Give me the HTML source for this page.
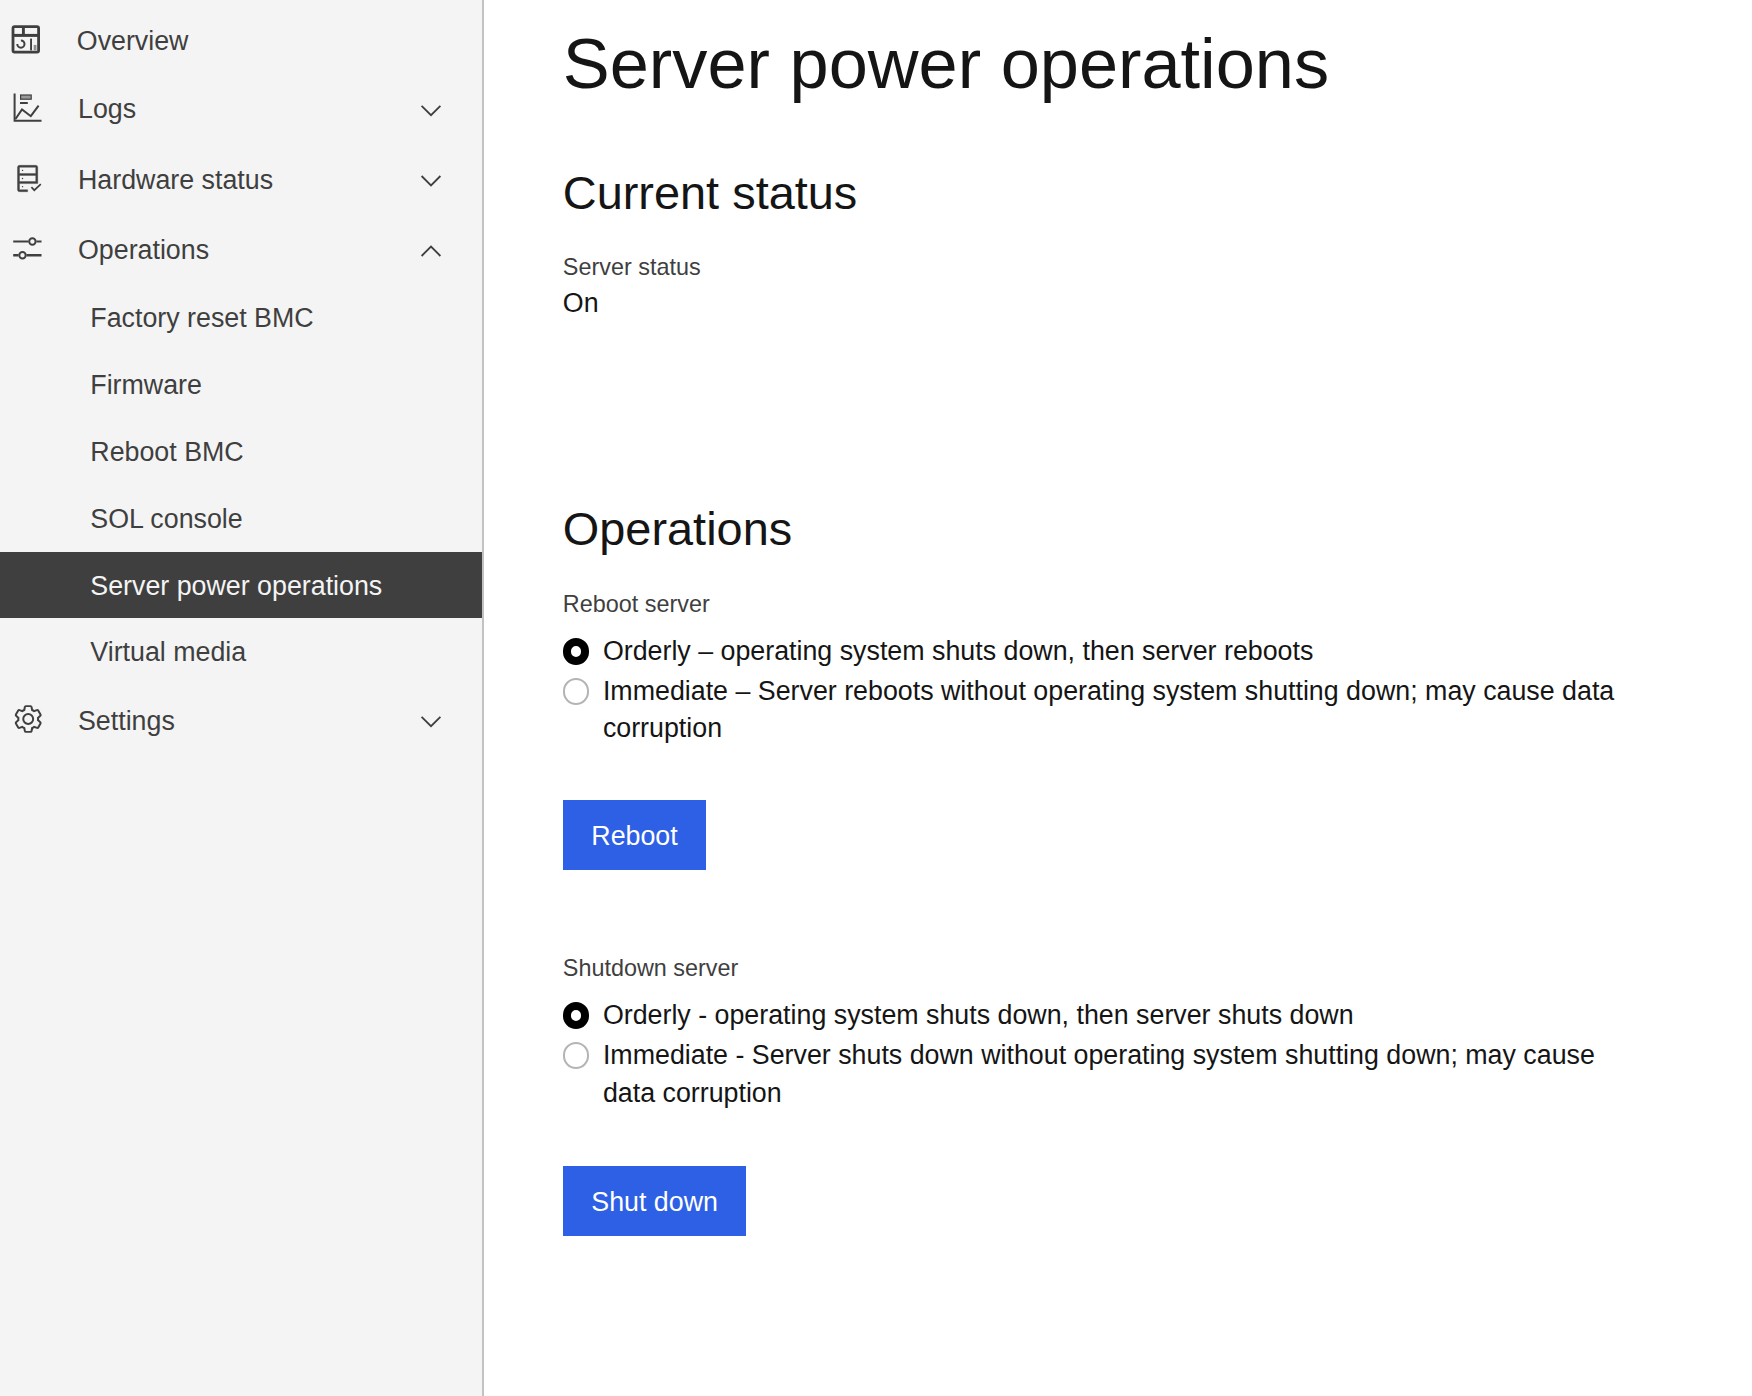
<!DOCTYPE html>
<html>
<head>
<meta charset="utf-8">
<style>
html,body{margin:0;padding:0;width:1752px;height:1396px;overflow:hidden;background:#fff;}
body{position:relative;font-family:"Liberation Sans",sans-serif;}
.t{position:absolute;white-space:nowrap;}
.nav{position:absolute;left:0;top:0;width:482.4px;height:1396px;background:#f4f4f4;}
.navb{position:absolute;left:482.4px;top:0;width:1.7px;height:1396px;background:#c2c2c2;}
.n{font-size:26.8px;line-height:26.8px;color:#3f3f3f;}
.act{position:absolute;left:0;top:551.6px;width:482.4px;height:66px;background:#3f3f3f;}
.b{font-size:26.8px;line-height:26.8px;color:#151515;}
.lbl{font-size:23.4px;line-height:23.4px;color:#3f3f3f;}
.h1{font-size:70.35px;line-height:70.35px;color:#151515;}
.h2{font-size:46.9px;line-height:46.9px;color:#151515;}
.btn{position:absolute;background:#2d60e5;height:70px;}
.btn span{position:absolute;left:28.5px;top:22.5px;font-size:26.8px;line-height:26.8px;color:#fff;white-space:nowrap;}
.rc{position:absolute;width:26.6px;height:26.6px;box-sizing:border-box;border-radius:50%;}
.on{background:#fff;border:8.5px solid #000;}
.off{background:#fff;border:2.4px solid #b4b4b4;}
svg{position:absolute;left:0;top:0;overflow:visible;}
</style>
</head>
<body>
<div class="nav"></div>
<div class="navb"></div>
<div class="act"></div>

<!-- sidebar text -->
<div class="t n" style="left:76.8px;top:27.5px;">Overview</div>
<div class="t n" style="left:78px;top:96.25px;">Logs</div>
<div class="t n" style="left:78px;top:166.7px;">Hardware status</div>
<div class="t n" style="left:78px;top:236.6px;">Operations</div>
<div class="t n" style="left:90.3px;top:305px;">Factory reset BMC</div>
<div class="t n" style="left:90.3px;top:371.9px;">Firmware</div>
<div class="t n" style="left:90.3px;top:438.8px;">Reboot BMC</div>
<div class="t n" style="left:90.3px;top:505.7px;">SOL console</div>
<div class="t n" style="left:90.3px;top:572.5px;color:#f4f4f4;">Server power operations</div>
<div class="t n" style="left:90.3px;top:639.4px;">Virtual media</div>
<div class="t n" style="left:78px;top:707.5px;">Settings</div>

<!-- icons -->
<svg width="1752" height="800" viewBox="0 0 1752 800">
  <!-- Overview (dashboard) -->
  <g fill="none" stroke="#3f3f3f">
    <rect x="13.0" y="26.6" width="25.6" height="25.5" rx="1.6" stroke-width="2.8"/>
    <path d="M12.7,35.4 H38.9" stroke-width="3"/>
    <path d="M23.4,26.3 V35.4" stroke-width="2.9"/>
    <path d="M20.9,40.5 A3.6,3.6 0 1 1 17.3,44.1" stroke-width="2"/>
  </g>
  <rect x="30.1" y="38.6" width="1.9" height="11.8" fill="#3f3f3f"/>
  <rect x="33.7" y="44.9" width="2.8" height="5.5" fill="#8f8f8f"/>
  <!-- Logs -->
  <g fill="none" stroke="#3f3f3f">
    <path d="M14.6,93.6 V120.8 H41.5" stroke-width="2"/>
    <path d="M15.5,119 L22,109.5 L30.8,116.2 L38.6,105.6" stroke-width="2"/>
  </g>
  <rect x="20.6" y="95" width="10.6" height="4.2" fill="#9a9a9a" stroke="#3f3f3f" stroke-width="1.2"/>
  <rect x="20" y="102" width="7.8" height="2" fill="#3f3f3f"/>
  <!-- Hardware status (data check) -->
  <g transform="translate(11.4,162.3) scale(1.0143)" fill="#3f3f3f">
    <circle cx="11" cy="8" r="0.7"/>
    <circle cx="11" cy="16" r="0.7"/>
    <circle cx="11" cy="24" r="0.7"/>
    <path d="M24,3H8A2,2,0,0,0,6,5V27a2,2,0,0,0,2,2h8V27H8V21H26V5A2,2,0,0,0,24,3Zm0,16H8V13H24Zm0-8H8V5H24Z" stroke="#3f3f3f" stroke-width="0.35"/>
    
  </g>
  <path d="M31.4,187.2 L34.3,190.2 L40.8,184.2" stroke="#3f3f3f" stroke-width="1.7" fill="none"/>
  <!-- Operations (settings adjust) -->
  <g stroke="#3f3f3f" stroke-width="2" fill="none">
    <path d="M13.2,241.5 H28.4 M36.4,241.5 H41.5"/>
    <circle cx="32.4" cy="241.5" r="3.2"/>
    <path d="M13.2,255.2 H18.5 M26.5,255.2 H41.5" stroke-width="2.5"/>
    <circle cx="22.5" cy="255.2" r="3.2"/>
  </g>
  <!-- Settings gear -->
  <g transform="translate(12.36,703.16) scale(0.99)" fill="#3f3f3f">
    <path d="M27,16.76c0-.25,0-.5,0-.76s0-.51,0-.77l1.92-1.68A2,2,0,0,0,29.3,11L26.94,7a2,2,0,0,0-1.73-1,2,2,0,0,0-.64.1l-2.43.82a11.35,11.35,0,0,0-1.31-.75l-.51-2.52a2,2,0,0,0-2-1.61H13.64a2,2,0,0,0-2,1.61l-.51,2.52a11.48,11.48,0,0,0-1.32.75L7.430,6.06A2,2,0,0,0,6.79,6,2,2,0,0,0,5.06,7L2.7,11a2,2,0,0,0,.41,2.51L5,15.24c0,.25,0,.5,0,.76s0,.51,0,.77L3.11,18.45A2,2,0,0,0,2.7,21L5.06,25a2,2,0,0,0,1.73,1,2,2,0,0,0,.64-.1l2.43-.82a11.35,11.35,0,0,0,1.31.75l.51,2.52a2,2,0,0,0,2,1.61h4.72a2,2,0,0,0,2-1.61l.51-2.52a11.48,11.48,0,0,0,1.32-.75l2.42.82a2,2,0,0,0,.64.1,2,2,0,0,0,1.73-1L29.3,21a2,2,0,0,0-.41-2.51ZM25.21,24l-3.43-1.16a8.86,8.86,0,0,1-2.71,1.57L18.36,28H13.64l-.71-3.55a9.36,9.36,0,0,1-2.7-1.57L6.79,24,4.430,20l2.72-2.4a8.9,8.9,0,0,1,0-3.13L4.43,12,6.79,8l3.43,1.160a8.86,8.86,0,0,1,2.71-1.57L13.64,4h4.72l.71,3.55a9.36,9.36,0,0,1,2.7,1.57L25.21,8,27.57,12l-2.72,2.4a8.9,8.9,0,0,1,0,3.13L27.57,20Z"/>
    <path d="M16,22a6,6,0,1,1,6-6A5.94,5.94,0,0,1,16,22Zm0-10a3.910,3.910,0,0,0-4,4,3.91,3.91,0,0,0,4,4,3.91,3.91,0,0,0,4-4A3.91,3.91,0,0,0,16,12Z"/>
  </g>
  <!-- chevrons -->
  <g stroke="#3f3f3f" stroke-width="1.8" fill="none">
    <path d="M421.6,105.8 L431,115.2 L440.4,105.8"/>
    <path d="M421.6,176 L431,185.4 L440.4,176"/>
    <path d="M421.6,256 L431,246.6 L440.4,256"/>
    <path d="M421.6,716.8 L431,726.2 L440.4,716.8"/>
  </g>
</svg>

<!-- main -->
<div class="t h1" style="left:562.8px;top:29px;">Server power operations</div>
<div class="t h2" style="left:562.8px;top:170.4px;">Current status</div>
<div class="t lbl" style="left:562.8px;top:255.5px;">Server status</div>
<div class="t b" style="left:562.8px;top:290.1px;">On</div>

<div class="t h2" style="left:562.8px;top:506px;">Operations</div>
<div class="t lbl" style="left:562.8px;top:593.25px;">Reboot server</div>
<div class="rc on" style="left:562.8px;top:638.1px;"></div>
<div class="t b" style="left:602.9px;top:637.65px;">Orderly – operating system shuts down, then server reboots</div>
<div class="rc off" style="left:562.8px;top:678.1px;"></div>
<div class="t b" style="left:602.9px;top:677.7px;">Immediate – Server reboots without operating system shutting down; may cause data</div>
<div class="t b" style="left:602.9px;top:714.9px;">corruption</div>
<div class="btn" style="left:562.8px;top:800.2px;width:143.4px;"><span>Reboot</span></div>

<div class="t lbl" style="left:562.8px;top:956.65px;">Shutdown server</div>
<div class="rc on" style="left:562.8px;top:1002.2px;"></div>
<div class="t b" style="left:602.9px;top:1001.75px;">Orderly - operating system shuts down, then server shuts down</div>
<div class="rc off" style="left:562.8px;top:1042.4px;"></div>
<div class="t b" style="left:602.9px;top:1041.9px;">Immediate - Server shuts down without operating system shutting down; may cause</div>
<div class="t b" style="left:602.9px;top:1079.5px;">data corruption</div>
<div class="btn" style="left:562.8px;top:1166px;width:183.6px;"><span>Shut down</span></div>
</body>
</html>
